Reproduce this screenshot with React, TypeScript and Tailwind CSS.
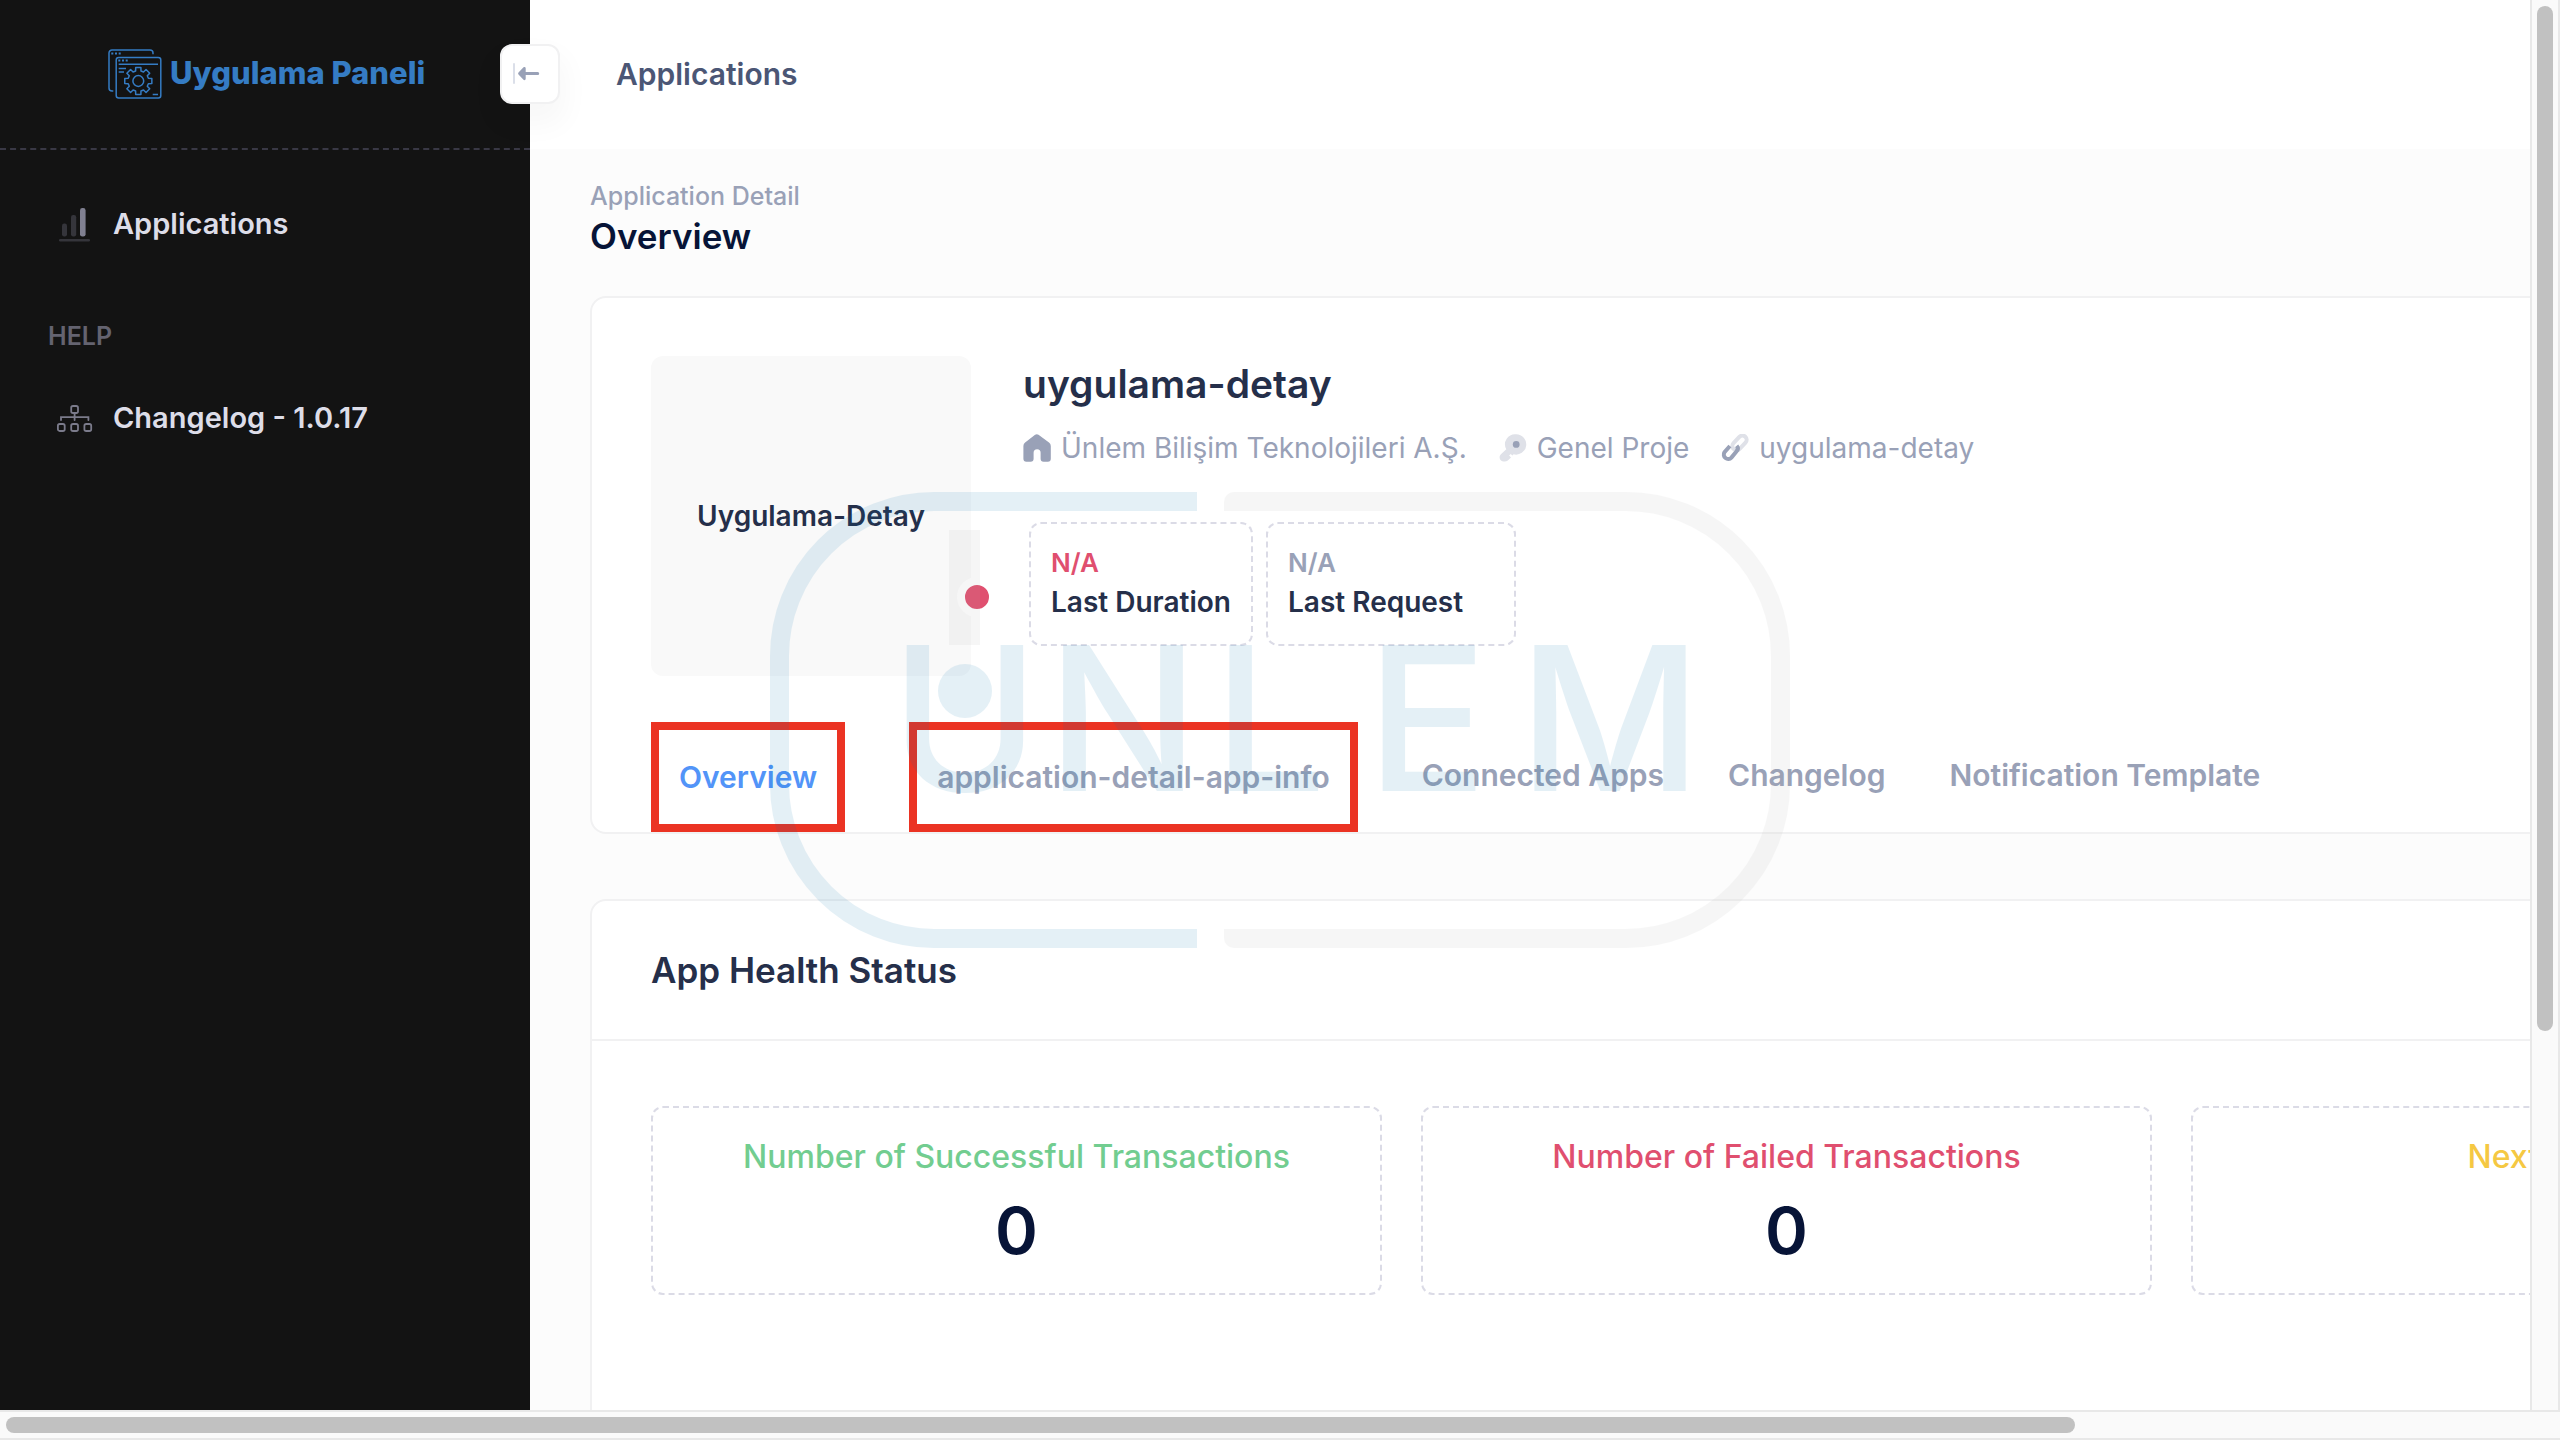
import React from "react";

const gearOutline = (cx: number, cy: number, outer: number, inner: number) => {
  const points: string[] = [];
  for (let i = 0; i < 8; i++) {
    const base = (i * Math.PI) / 4 - Math.PI / 2;
    const corners: [number, number][] = [
      [inner, -0.26],
      [outer, -0.19],
      [outer, 0.19],
      [inner, 0.26],
    ];
    for (const [r, a] of corners) {
      points.push(`${(cx + r * Math.cos(base + a)).toFixed(2)} ${(cy + r * Math.sin(base + a)).toFixed(2)}`);
    }
  }
  return `M${points.join("L")}Z`;
};

function PanelLogo() {
  return (
    <svg viewBox="0 0 54 50" className="h-[50px] w-[54px] shrink-0" fill="none" stroke="#357cc4" aria-hidden="true">
      <path d="M5.3 42H4a3 3 0 0 1-3-3V4a3 3 0 0 1 3-3h38a3 3 0 0 1 3 3v1.3" strokeWidth="1.5" />
      <rect x="8.2" y="8.4" width="44.6" height="40.6" rx="2.5" strokeWidth="1.5" />
      <path d="M10.7 15.2H50M10.7 19.4H18M10.7 23H16M44.7 45.4H50" strokeWidth="1.5" />
      <path d="M3.3 4.4h2M7 4.4h2M10.7 4.4h2M10.3 11.4h2M14 11.4h2M17.7 11.4h2" strokeWidth="2" />
      <path d={gearOutline(30.3, 32, 13.8, 10.4)} strokeWidth="1.5" strokeLinejoin="round" />
      <circle cx="30.3" cy="32" r="5.4" strokeWidth="1.5" />
    </svg>
  );
}

function ChartIcon() {
  return (
    <svg viewBox="0 0 36 36" className="size-9 shrink-0" aria-hidden="true">
      <g fill="#35353b">
        <rect x="2" y="33" width="31" height="2.6" rx="1.3" />
        <rect x="5" y="17.5" width="5" height="13" rx="2.2" />
        <rect x="14" y="9" width="5.2" height="21.5" rx="2.2" />
      </g>
      <rect x="23" y="2" width="5.6" height="28.6" rx="2.4" fill="#808091" />
    </svg>
  );
}

function SitemapIcon() {
  return (
    <svg viewBox="0 0 36 36" className="size-9 shrink-0" fill="none" stroke="#7b7b8b" strokeWidth="1.8" strokeLinecap="round" aria-hidden="true">
      <rect x="14.2" y="6" width="6.8" height="7" rx="1.8" />
      <path d="M17.6 13v7M4 20v-2.8h27.4V20" />
      <rect x="0.9" y="24" width="6.8" height="7" rx="1.8" />
      <rect x="14.2" y="24" width="6.8" height="7" rx="1.8" />
      <rect x="27.4" y="24" width="6.8" height="7" rx="1.8" />
    </svg>
  );
}

function HomeIcon() {
  return (
    <svg viewBox="0 0 28 28" className="size-7 shrink-0" fill="#99a1b7" aria-hidden="true">
      <path d="M12.1.7a3.4 3.4 0 0 1 3.4 0L26 8.4a4.6 4.6 0 0 1 1.8 3.7v12.6a3 3 0 0 1-3 3h-4.2a3 3 0 0 1-3-3v-5.900a3.500 3.500 0 0 0-7 0v5.900a3 3 0 0 1-3 3H3.400a3 3 0 0 1-3-3V12.100a4.600 4.600 0 0 1 1.700-3.700z" />
    </svg>
  );
}

function KeyIcon() {
  return (
    <svg viewBox="0 0 28 28" className="size-7 shrink-0" aria-hidden="true">
      <path
        d="M17.200.200a10.200 10.200 0 1 1-2.600 20.100l-1.200 1.300-1.700-1.600-1.600 1.500 1.900 1.900-3.200 3.200c-2 1.500-5.500 1.200-7.300-.7-1.400-1.600-1.100-4.400.4-5.700l5.400-4.900A10.200 10.200 0 0 1 17.200.200z"
        fill="#dfe1e8"
      />
      <circle cx="17.200" cy="10.400" r="3.400" fill="#99a1b7" />
    </svg>
  );
}

function LinkIcon() {
  return (
    <svg viewBox="0 0 28 28" className="size-7 shrink-0" fill="none" strokeWidth="4" aria-hidden="true">
      <rect x="10" y="4.700" width="17" height="8.400" rx="4.200" transform="rotate(-47 18.500 8.900)" stroke="#dfe1e8" />
      <path d="M15.700 11.700A4.200 4.200 0 0 1 15.600 17.200l-5.200 6.400a4.400 4.400 0 0 1-6.900-5.400l5.400-6.200" stroke="#99a1b7" />
    </svg>
  );
}

function Watermark() {
  return (
    <div className="pointer-events-none absolute inset-0 z-20 flex items-center justify-center" aria-hidden="true">
      <svg viewBox="770 493 1020 456" className="h-[456px] w-[1020px] opacity-10">
        <g fill="none" strokeWidth="19">
          <path d="M1197 502.500H934A154.500 154.500 0 0 0 779.500 657V785A154.500 154.500 0 0 0 934 939.500H1197" stroke="#0073af" />
          <path d="M1234 502.500H1626A154.500 154.500 0 0 1 1780.500 657V785A154.500 154.500 0 0 1 1626 939.500H1234" stroke="#afafaf" />
        </g>
        <path d="M1224 512V503a10 10 0 0 1 10-10v19zM1224 930v9a10 10 0 0 0 10 10v-19z" fill="#afafaf" />
        <rect x="949" y="531" width="31" height="115" fill="#afafaf" />
        <circle cx="965" cy="692" r="27" fill="#0073af" />
        <text
          x="965 1123 1270 1427 1610"
          y="792"
          textAnchor="middle"
          fill="#0073af"
          className="font-['Inter',sans-serif] text-[201px] font-medium"
        >
          UNLEM
        </text>
      </svg>
    </div>
  );
}

function Sidebar() {
  return (
    <aside className="w-[530px] shrink-0 bg-[#131313]">
      <div className="relative flex h-[150px] items-center border-b-2 border-dashed border-[#393845] pl-[108px]">
        <a href="#" className="flex items-center gap-2 text-[31px] leading-none font-extrabold text-[#357cc4]">
          <PanelLogo />
          <span className="pb-1">Uygulama Paneli</span>
        </a>
        <button
          type="button"
          aria-label="Collapse sidebar"
          className="absolute top-11 -right-[30px] z-10 flex size-[60px] items-center justify-center rounded-xl border-2 border-[#f1f1f2] bg-white shadow-[0_16px_28px_6px_rgba(0,0,0,0.03)]"
        >
          <svg viewBox="0 0 34 34" className="size-[34px]" aria-hidden="true">
            <rect x="0" y="6" width="2" height="21" rx="1" fill="#dbdfe9" />
            <path d="M5.500 15.600a1.500 1.500 0 0 0 0 2l5 5.200a1.300 1.300 0 0 0 2.200-1V18h12a1.400 1.400 0 0 0 0-3h-12v-3.800a1.300 1.300 0 0 0-2.200-.9z" fill="#99a1b7" />
          </svg>
        </button>
      </div>
      <nav className="pt-11 text-[29px] font-semibold text-[#dddde8]">
        <a href="#" className="flex h-[60px] items-center gap-5 pl-[57px]">
          <ChartIcon />
          Applications
        </a>
        <div className="mt-[53px] flex h-[60px] items-center pl-12 text-[25px] font-semibold text-[#646370]">HELP</div>
        <a href="#" className="mt-[21px] flex h-[60px] items-center gap-5 pl-[57px]">
          <SitemapIcon />
          Changelog - 1.0.17
        </a>
      </nav>
    </aside>
  );
}

function AppSummary() {
  return (
    <section className="rounded-2xl border-2 border-[#f1f1f2] bg-white px-[59px] pt-[58px]">
      <div className="flex gap-[52px]">
        <div className="relative flex size-80 shrink-0 items-center justify-center rounded-xl bg-[#f9f9f9] text-[28px] font-semibold text-[#252f4a]">
          Uygulama-Detay
          <span className="absolute -right-[26px] bottom-[59px] size-10 rounded-full border-8 border-white bg-[#e04f6f]" />
        </div>
        <div>
          <h2 className="text-[39px] leading-[56px] font-semibold text-[#252f4a]">uygulama-detay</h2>
          <div className="mt-4 flex gap-8 text-[28px] leading-10 text-[#99a1b7]">
            <a href="#" className="flex items-center gap-2.5"><HomeIcon />Ünlem Bilişim Teknolojileri A.Ş.</a>
            <a href="#" className="flex items-center gap-2.5"><KeyIcon />Genel Proje</a>
            <a href="#" className="flex items-center gap-2.5"><LinkIcon />uygulama-detay</a>
          </div>
          <div className="mt-[54px] ml-1.5 flex gap-[13px]">
            <div className="h-[124px] w-56 rounded-xl border-2 border-dashed border-[#dbdbe6] px-5 pt-5 font-semibold">
              <div className="text-[26px] leading-[38px] text-[#e04f6f]">N/A</div>
              <div className="text-[28px] leading-10 whitespace-nowrap text-[#252f4a]">Last Duration</div>
            </div>
            <div className="h-[124px] w-[250px] rounded-xl border-2 border-dashed border-[#dbdbe6] px-5 pt-5 font-semibold">
              <div className="text-[26px] leading-[38px] text-[#99a1b7]">N/A</div>
              <div className="text-[28px] leading-10 whitespace-nowrap text-[#252f4a]">Last Request</div>
            </div>
          </div>
        </div>
      </div>
      <nav className="mt-[46px] flex items-center gap-16 text-[30px] font-semibold text-[#99a1b7]">
        <a href="#" className="flex h-[110px] items-center border-8 border-[#eb3323] px-5 text-[#5294f8]">Overview</a>
        <a href="#" className="flex h-[110px] items-center border-8 border-[#eb3323] px-5">application-detail-app-info</a>
        <a href="#" className="pb-1">Connected Apps</a>
        <a href="#" className="pb-1">Changelog</a>
        <a href="#" className="pb-1">Notification Template</a>
      </nav>
    </section>
  );
}

const healthStats = [
  { label: "Number of Successful Transactions", value: "0", color: "text-[#72cd90]" },
  { label: "Number of Failed Transactions", value: "0", color: "text-[#e04f6f]" },
  { label: "Next Check", value: "", color: "text-[#f5c842]" },
];

function HealthStatus() {
  return (
    <section className="mt-[65px] rounded-2xl border-2 border-[#f1f1f2] bg-white pb-40">
      <h2 className="flex h-[140px] items-center border-b-2 border-[#f1f1f2] px-[59px] text-[35px] font-semibold text-[#252f4a]">
        App Health Status
      </h2>
      <div className="flex gap-[39px] px-[59px] pt-[65px]">
        {healthStats.map((stat) => (
          <div key={stat.label} className="h-[189px] w-[731px] shrink-0 rounded-xl border-2 border-dashed border-[#dbdbe6] pt-[25px] text-center">
            <div className={`text-[32px] leading-[48px] font-medium ${stat.color}`}>{stat.label}</div>
            <div className="mt-3.5 text-[65px] leading-[72px] font-semibold text-[#071437]">{stat.value}</div>
          </div>
        ))}
      </div>
    </section>
  );
}

export default function App() {
  return (
    <div className="relative flex h-screen flex-col overflow-hidden bg-[#fcfcfc] font-['Inter',sans-serif]">
      <div className="flex min-h-0 flex-1">
        <Sidebar />
        <main className="min-w-0 flex-1 overflow-hidden">
          <header className="flex h-[149px] items-center bg-white pl-[86px] text-[30px] font-semibold text-[#4b5675]">
            Applications
          </header>
          <div className="w-max pt-[29px] pl-[60px]">
            <div className="text-[25px] leading-9 font-medium text-[#99a1b7]">Application Detail</div>
            <h1 className="mb-[38px] text-[35px] leading-[44px] font-semibold text-[#071437]">Overview</h1>
            <AppSummary />
            <HealthStatus />
          </div>
        </main>
        <div className="w-[30px] shrink-0 border-x-2 border-[#e8e8e8] bg-[#fafafa] px-[5px] pt-1.5">
          <div className="h-[73%] w-4 rounded-full bg-[#c1c1c1]" />
        </div>
      </div>
      <div className="h-[30px] shrink-0 border-y-2 border-[#e8e8e8] bg-[#fafafa] py-[5px] pl-1.5">
        <div className="h-4 w-[81%] rounded-full bg-[#c1c1c1]" />
      </div>
      <Watermark />
    </div>
  );
}
